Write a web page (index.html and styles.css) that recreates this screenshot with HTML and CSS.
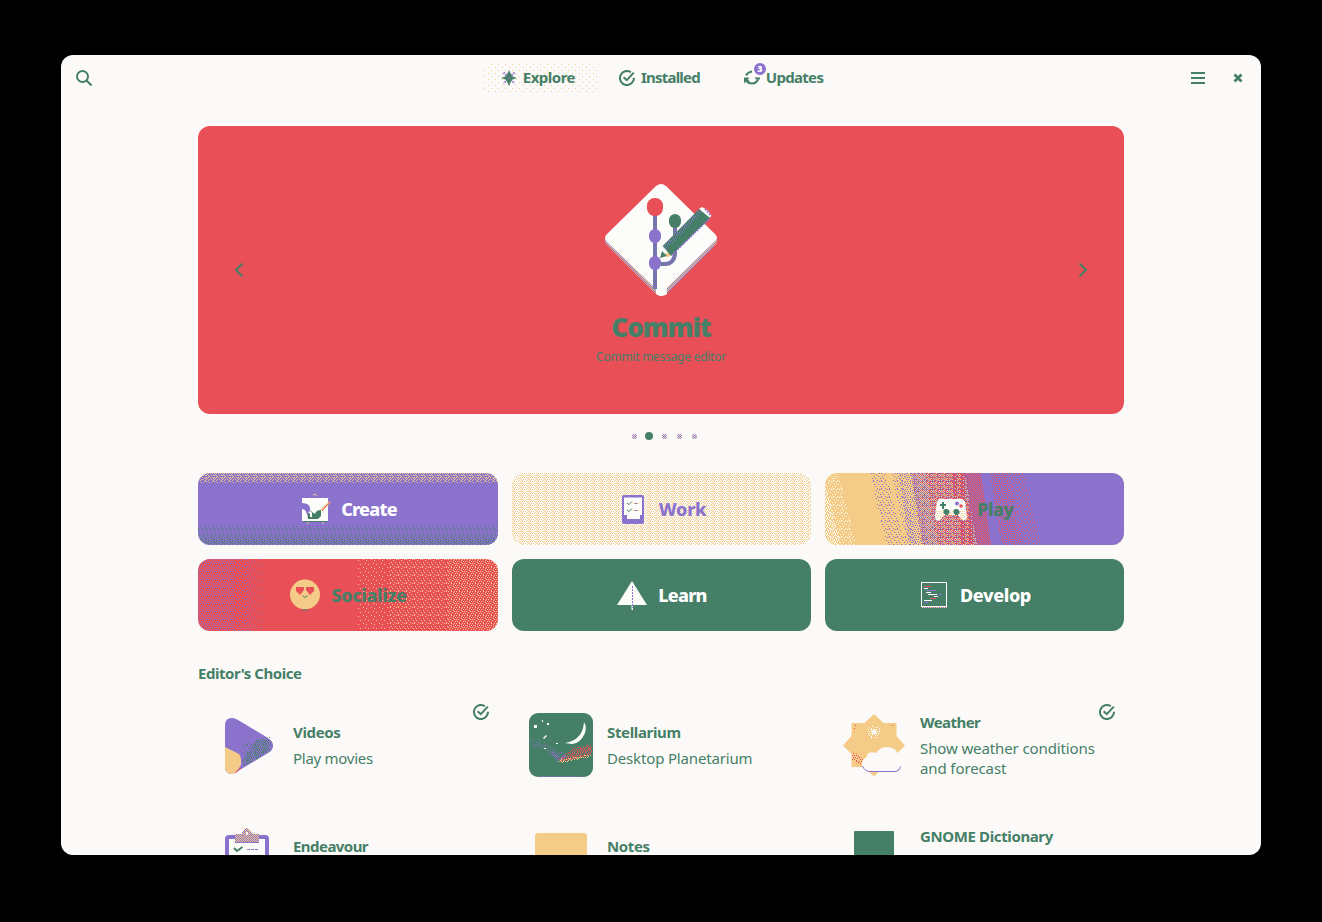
FILE: index.html
```html
<!DOCTYPE html>
<html lang="en">
<head>
<meta charset="utf-8">
<title>Software</title>
<link rel="stylesheet" href="styles.css">
</head>
<body>
<svg class="defs" width="0" height="0" aria-hidden="true">
  <defs>
    <path id="d1" d="M0 1.500h1M5 .5h1M2 5.500h1M7 4.500h1"/>
    <path id="d2" d="M0 .5h1M6 .5h1M3 1.500h1M1 3.500h1M5 3.500h1M2 5.500h1M7 5.500h1M4 7.500h1M0 7.500h1"/>
    <path id="d3" d="M0 .5h1M2 .5h1M5 .5h1M7 1.500h1M1 2.500h1M3 2.500h1M5 2.500h1M7 3.500h1M0 4.500h1M2 4.500h1M4 4.500h1M6 5.500h1M1 6.500h1M3 6.500h1M5 7.500h1"/>
    <path id="d4" d="M0 .5h1M2 .5h1M4 .5h1M6 .5h1M1 1.500h1M0 2.500h1M2 2.500h1M5 2.500h1M7 2.500h1M3 3.500h1M0 4.500h1M2 4.500h1M4 4.500h1M6 4.500h1M1 5.500h1M7 5.500h1M0 6.500h1M3 6.500h1M5 6.500h1M2 7.500h1M7 7.500h1"/>
    <pattern id="cream-0" width="7" height="6" patternUnits="userSpaceOnUse"><path class="f-cream" d="M1 1h1v1h-1zM5 4h1v1h-1z"/></pattern>
    <pattern id="cream-a" width="8" height="8" patternUnits="userSpaceOnUse"><use href="#d1" class="s-cream"/></pattern>
    <pattern id="cream-b" width="8" height="8" patternUnits="userSpaceOnUse"><use href="#d2" class="s-cream"/></pattern>
    <pattern id="cream-c" width="8" height="8" patternUnits="userSpaceOnUse"><use href="#d3" class="s-cream"/></pattern>
    <pattern id="cream-d" width="8" height="8" patternUnits="userSpaceOnUse"><use href="#d4" class="s-cream"/></pattern>
    <pattern id="green-b" width="8" height="8" patternUnits="userSpaceOnUse"><use href="#d2" class="s-green"/></pattern>
    <pattern id="green-c" width="8" height="8" patternUnits="userSpaceOnUse"><use href="#d3" class="s-green"/></pattern>
    <pattern id="green-d" width="8" height="8" patternUnits="userSpaceOnUse"><use href="#d4" class="s-green"/></pattern>
    <pattern id="purple-a" width="8" height="8" patternUnits="userSpaceOnUse"><use href="#d1" class="s-purple"/></pattern>
    <pattern id="purple-b" width="8" height="8" patternUnits="userSpaceOnUse"><use href="#d2" class="s-purple"/></pattern>
    <pattern id="purple-c" width="8" height="8" patternUnits="userSpaceOnUse"><use href="#d3" class="s-purple"/></pattern>
    <pattern id="purple-d" width="8" height="8" patternUnits="userSpaceOnUse"><use href="#d4" class="s-purple"/></pattern>
    <pattern id="purple-e" width="2" height="2" patternUnits="userSpaceOnUse"><path class="f-purple" d="M0 0h1v1h-1zM1 1h1v1h-1z"/></pattern>
    <pattern id="red-b" width="8" height="8" patternUnits="userSpaceOnUse" x="1" y="1"><use href="#d2" class="s-red"/></pattern>
    <pattern id="red-c" width="8" height="8" patternUnits="userSpaceOnUse" x="1" y="0"><use href="#d3" class="s-red"/></pattern>
    <pattern id="red-d" width="8" height="8" patternUnits="userSpaceOnUse" x="1" y="0"><use href="#d4" class="s-red"/></pattern>
    <pattern id="white-b" width="8" height="8" patternUnits="userSpaceOnUse"><use href="#d2" class="s-white"/></pattern>
    <pattern id="white-c" width="8" height="8" patternUnits="userSpaceOnUse"><use href="#d3" class="s-white"/></pattern>
    <symbol id="check" viewBox="0 0 16 16"><path class="line" d="M11.900 2.200A7 7 0 1 0 15 7.800M4.600 7.200l3.200 3L14.800 2.600"/></symbol>
  </defs>
</svg>

<main class="window">
  <header class="header">
    <button class="search" aria-label="Search"><svg width="16" height="16"><circle class="line" cx="6.500" cy="6.500" r="5.500"/><path class="line" d="M10.500 10.500L15.500 15.500"/></svg></button>
    <nav class="nav">
      <a class="nav-item active">
        <svg class="fill" width="114" height="31" shape-rendering="crispEdges"><rect width="114" height="31" rx="6" fill="url(#cream-0)"/></svg>
        <svg class="nav-icon" width="16" height="16"><path class="s-purple star-dots" d="M2.500 2.500l11 11M13.500 2.500l-11 11"/><path class="f-green" d="M8 0l2 4.500 1.500 2L16 8l-4.500 1.500-1.500 2L8 16l-2-4.500-1.500-2L0 8l4.500-1.500 1.500-2z"/><circle class="f-purple" cx="8" cy="8" r="1"/></svg>
        <span class="w-explore">Explore</span>
      </a>
      <a class="nav-item"><svg class="nav-icon" width="16" height="16"><use href="#check"/></svg><span class="w-installed">Installed</span></a>
      <a class="nav-item">
        <svg class="nav-icon" width="16" height="16"><path class="line" d="M2 5.500Q4 2 8 1.500M14 9.500Q12 13.500 8 13.500 5 13.500 3 11.500"/><path class="f-green" d="M0 7.500h5.500L4 9.500l1.500 2-2 2-1.500-2-2 2zM10.500 7.500H16v2h-4z"/></svg>
        <span class="w-updates">Updates</span><b class="badge">3</b>
      </a>
    </nav>
    <div class="controls">
      <svg width="14" height="12" shape-rendering="crispEdges"><path class="line" d="M0 1h14M0 6h14M0 11h14"/></svg>
      <svg width="10" height="10"><path class="line heavy" d="M1.500 1.500l7 7M8.500 1.500l-7 7"/></svg>
    </div>
  </header>

  <div class="content">
    <section class="banner">
      <svg class="arrow" width="10" height="16"><path class="line" d="M8.500 1.500L2 8l6.500 6.500"/></svg>
      <div class="feature">
        <svg width="128" height="128">
          <path class="f-cream" d="M8 61V65Q8 67 10 69L59 118Q64 122 69 118L118 69Q120 67 120 65V61Z"/>
          <path fill="url(#purple-e)" shape-rendering="crispEdges" d="M8 61V65Q8 67 10 69L59 118Q64 122 69 118L118 69Q120 67 120 65V61Z"/>
          <path class="f-white" d="M59 10Q64 6 69 10L118 58Q122 62 118 65L70 112V118Q64 122 59 118V113L10 66Q6 62 10 58Z"/>
          <path class="branch" d="M58 38V113M64 88H69Q78 87 78 76V50"/>
          <path class="branch-dots" d="M58 38V113M64 88H69Q78 87 78 76V50"/>
          <rect class="f-red" x="50" y="22" width="16" height="18" rx="7.500"/>
          <rect class="f-green" x="72" y="38" width="12" height="14" rx="6"/>
          <rect class="f-purple" x="52" y="53" width="12" height="14" rx="6"/>
          <rect class="f-purple" x="52" y="80" width="12" height="14" rx="6"/>
          <path class="f-white" d="M65.700 70L63 82 74 80ZM102 33L105 31Q112 34 114.500 40L112 42Z"/>
          <path class="f-cream" d="M68 77h6v3l-5 1z"/>
          <path class="f-green" d="M102 33L113 42 74 80 65.700 70ZM65 75l5 5-7 2z"/>
          <path fill="url(#purple-c)" shape-rendering="crispEdges" d="M102 33L106 36 69 73 65.700 70Z"/>
          <path class="pencil-edge" d="M112 43L75 79M108 33L114 40"/>
        </svg>
        <h1>Commit</h1>
        <p>Commit message editor</p>
      </div>
      <svg class="arrow" width="10" height="16"><path class="line" d="M1.500 1.500L8 8l-6.500 6.500"/></svg>
    </section>

    <div class="dots"><i></i><i class="on"></i><i></i><i></i><i></i></div>

    <section class="tiles">
      <a class="tile purple">
        <svg class="fill" width="300" height="72" shape-rendering="crispEdges"><path fill="url(#cream-d)" d="M0 0h300v8H0z"/><path fill="url(#cream-b)" d="M0 8h300v3H0z"/><path fill="url(#green-b)" d="M0 53h300v8H0z"/><path fill="url(#green-c)" d="M0 61h300v5H0z"/><path fill="url(#green-d)" d="M0 66h300v6H0z"/></svg>
        <svg width="32" height="32"><path class="s-cream" d="M14 2q3-2 4 1M9 26v5M24 26v5"/><path class="f-white" d="M3 5h26v23H3z"/><path class="f-green" d="M4 28h24v1H4zM8 18q3-2 5 1l3 2q1-4 6-4v6l-3 3H9z"/><path class="f-purple" d="M3 10q9 0 8 8l-3 4q-1-6-5-6z"/><path class="f-white" d="M9 19q3-2 4 1v4h-2v-3z"/><path class="s-cream thick" d="M22 17l9-8"/><path class="s-red" d="M23 18l8-9"/></svg>
        <span class="w-create">Create</span>
      </a>
      <a class="tile pale">
        <svg class="fill" width="299" height="72" shape-rendering="crispEdges"><path fill="url(#cream-d)" d="M0 0h299v72H0z"/></svg>
        <svg width="32" height="32"><rect class="f-purple" x="5" y="2" width="22" height="29" rx="2"/><path class="f-white" d="M7 4.500h18V22h-2v4H10v-4H7z"/><path class="s-green" d="M10 10l2 1.500 3-3M10 17l2 1.500 3-3"/><path class="s-cream" d="M16 10.500h6M16 17.500h6"/><path class="s-purple" d="M18 10.500h2M18 17.500h2"/></svg>
        <span class="w-work">Work</span>
      </a>
      <a class="tile sand">
        <svg class="fill" width="299" height="72" shape-rendering="crispEdges">
          <path fill="url(#white-b)" d="M0 0H13L31 72H0z"/>
          <path fill="url(#white-c)" d="M0 10L16 72H0z"/>
          <path fill="url(#purple-b)" d="M45 0H60L81 72H62z"/>
          <path fill="url(#purple-b)" d="M66 0H76L92 72H82z"/>
          <path fill="url(#purple-c)" d="M74 0H90L104 72H84z"/>
          <path fill="url(#purple-e)" d="M86 0H170V72H98z"/>
          <path fill="url(#red-b)" d="M86 0H170V72H96z"/>
          <path fill="url(#red-c)" d="M100 0H170V72H112z"/>
          <path fill="url(#red-d)" d="M126 0H170V72H136z"/>
          <path class="f-red" d="M140 0H170L185 72H152z"/>
          <path fill="url(#purple-e)" d="M138 0H170L185 72H150z"/>
          <path class="f-purple" d="M156 0H299V72H166z"/>
          <path fill="url(#red-c)" d="M165 0H184L198 72H176z"/>
          <path fill="url(#red-b)" d="M184 0H199L216 72H198z"/>
        </svg>
        <svg width="32" height="32"><path class="f-white" d="M2 9Q4 5 8 6H24Q28 5 30 9L32 24Q31 28 27 27L23 22H9L5 27Q0 29 0 23Z"/><path fill="url(#cream-c)" shape-rendering="crispEdges" d="M1 17h30v8l-4 2-4-5H9l-4 5-4-2z"/><path class="f-green" d="M7 9h2v2h2v2H9v3H7v-3H5v-2h2zM8.500 17l2-1h2l2 2v2l-2 2h-2l-2-2zM18.500 17l2-1h2l2 2v2l-2 2h-2l-2-2z"/><circle class="f-purple" cx="22" cy="10.500" r="2"/><circle class="f-red" cx="26" cy="13" r="1.800"/></svg>
        <span class="w-play">Play</span>
      </a>
      <a class="tile red">
        <svg class="fill" width="300" height="72" shape-rendering="crispEdges"><path fill="url(#purple-c)" d="M0 0h36v72H0z"/><path fill="url(#purple-b)" d="M36 0h18v72H36z"/><path fill="url(#purple-a)" d="M54 0h10v72H54z"/><path fill="url(#cream-a)" d="M160 0h32v72H160z"/><path fill="url(#cream-b)" d="M192 0h58v72H192z"/><path fill="url(#cream-c)" d="M250 0h50v72H250z"/></svg>
        <svg width="32" height="32"><circle class="f-cream" cx="16" cy="15.500" r="15"/><path class="f-red" d="M7 8h8v3l-4 5-4-4zM17 8h8v4l-4 4-4-5z"/><path class="s-green" d="M13.500 16.500l2.500 2 2.500-2M13 31h6"/></svg>
        <span class="w-social">Socialize</span>
      </a>
      <a class="tile green">
        <svg width="32" height="32"><path class="f-white" d="M16 2l15 24H17v5h-1.500v-5H1z"/><path class="spine" d="M16.500 7v22"/></svg>
        <span class="w-learn">Learn</span>
      </a>
      <a class="tile green">
        <svg width="32" height="32" shape-rendering="crispEdges"><path class="s-white" d="M3.500 3.500h25v24h-25z"/><path class="f-purple" d="M4 28h25v1H4z"/><path class="s-sill" d="M4 28.500h25"/><path class="s-red" d="M6 7.500h7M12 19.500h6"/><path class="s-white" d="M6 9.500h4M8 13.500h5M10 15.500h9M16 17.500h4M6 21.500h8"/><path class="s-purple" d="M8 11.500h10M20 15.500h4M6 23.500h4"/></svg>
        <span class="w-develop">Develop</span>
      </a>
    </section>

    <h2>Editor's Choice</h2>
    <section class="cards">
      <article class="card">
        <svg width="64" height="64"><path class="f-purple" d="M10 12Q10 5 17 5Q20 5 23 7L53 25Q58 28 58 33Q58 37 53 40L23 58Q19 61 16 61Q10 60 10 54Z"/><g shape-rendering="crispEdges"><path fill="url(#green-b)" d="M27 28h10L56 24V38L28 54z"/><path fill="url(#green-d)" d="M43 26L54 27q4 6-1 12L28 54V46z"/></g><path class="f-cream" d="M10 34l14 7q2 2 2 7v4q-5 9-10 9-6-1-6-7z"/><path class="s-red" d="M20 60l6-5"/></svg>
        <div><h3 class="w-videos">Videos</h3><p class="w-movies">Play movies</p></div>
        <svg class="mark" width="16" height="16"><use href="#check"/></svg>
      </article>
      <article class="card">
        <svg width="64" height="64"><rect class="f-green" width="64" height="64" rx="9"/><g shape-rendering="crispEdges"><path fill="url(#purple-b)" d="M1 25l14 3 20 13 5 3-10 6-15-13L1 30z"/><path fill="url(#purple-d)" d="M18 35l14 9 4-3v9h-7z"/><path fill="url(#red-d)" d="M29 47L44 35 63 31V42L31 49z"/><path fill="url(#red-c)" transform="translate(1 1)" d="M36 43L48 35 62 31V42L36 47z"/><path fill="url(#cream-d)" d="M29 47L63 41V44L31 50z"/></g><path class="f-white" d="M55 9q3 5 1 11-5 11-13 11l-7-1q18-3 19-21zM5 12h3v3H5zM13 7h1v2h-1zM18 10h2v2h-2zM17 22l1 1-3 3-1-1zM15 35h2v1h-2zM27 30h2v1h-2z"/><path class="sill" d="M10 63.500h44"/></svg>
        <div><h3 class="w-stellarium">Stellarium</h3><p class="w-desktop">Desktop Planetarium</p></div>
      </article>
      <article class="card">
        <svg width="64" height="64"><path class="f-cream" d="M9.500 10H22.500L32 1 41.500 10H54.500V23L63 32.500 54.500 41V54H42L32 63.500 22 54H9.500V41L1 32.500 9.500 23Z"/><path fill="url(#white-c)" d="M29 13h6l3 3v5l-3 4h-6l-3-3v-6z"/><circle class="f-white" cx="32" cy="19" r="2.500"/><path fill="url(#red-c)" d="M10 40h4l7 6-2 7-9-6z"/><path class="f-bg" d="M20 51q0-5 5-7v-2q2-4 9-2 4-6 11-6 8 0 11 7l5 2v9q-1 6-6 6H27q-7 0-7-7z"/><path class="s-purple" d="M20.500 53q2 5 7 5.500H54q4-1 4.500-5"/><path class="s-red" d="M13 12.500h1M12 15.500h1M50 12.500h1"/></svg>
        <div><h3 class="w-weather">Weather</h3><p class="w-show">Show weather conditions<br>and forecast</p></div>
        <svg class="mark" width="16" height="16"><use href="#check"/></svg>
      </article>
      <article class="card">
        <svg width="64" height="64"><rect class="f-purple" x="10" y="8" width="44" height="50" rx="4"/><path class="f-white" d="M14 12h36v44H14z"/><path class="f-cream" d="M20 7h7l1-3 4-3 4 3 1 3h7v9H20z"/><path fill="url(#purple-e)" shape-rendering="crispEdges" d="M20 7h7l1-3 4-3 4 3 1 3h7v9H20z"/><path class="f-white" d="M31 5h2v3h-2z"/><path class="s-purple" d="M20 15.500h24"/><path class="s-green thick" d="M19 21l3 3 5.500-4"/><path class="s-purple dash" d="M32 22.500h11"/></svg>
        <div><h3 class="w-endeavour">Endeavour</h3><p></p></div>
      </article>
      <article class="card">
        <svg width="64" height="64"><rect class="f-cream" x="6" y="6" width="52" height="54" rx="3"/></svg>
        <div><h3 class="w-notes">Notes</h3><p></p></div>
      </article>
      <article class="card">
        <svg width="64" height="64"><rect class="f-green" x="12" y="4" width="40" height="56" rx="1"/></svg>
        <div><h3 class="w-dict">GNOME Dictionary</h3><p class="two-lines"></p></div>
      </article>
    </section>
  </div>
</main>
</body>
</html>
```

FILE: styles.css
```css
:root {
  --bg: #fcfaf8;
  --red: #e84f57;
  --green: #457f67;
  --purple: #8b72cd;
  --cream: #f5cb88;
}
* { box-sizing: border-box; }
body {
  margin: 0;
  height: 922px;
  padding: 55px 61px;
  overflow: hidden;
  background: #000;
  color: var(--green);
  font: 15px/20px "Noto Sans", "Open Sans", sans-serif;
}
h1, h2, h3, p { margin: 0; }
svg { display: block; flex: none; }
.defs { position: absolute; }

.f-cream { fill: var(--cream); }
.f-green { fill: var(--green); }
.f-purple { fill: var(--purple); }
.f-red { fill: var(--red); }
.f-white { fill: #fcfcfb; }
.f-bg { fill: var(--bg); }
.line { fill: none; stroke: var(--green); stroke-width: 2; }
.heavy { stroke-width: 2.8; }
.s-cream, .s-green, .s-purple, .s-red, .s-white { fill: none; stroke-width: 1; }
.s-cream { stroke: var(--cream); }
.s-green { stroke: var(--green); }
.s-purple { stroke: var(--purple); }
.s-red { stroke: var(--red); }
.s-white { stroke: #fff; }
.thick { stroke-width: 2; }
.dash { stroke-dasharray: 3 1; }
.star-dots { stroke-width: 2; stroke-dasharray: 1.5 1; }
.s-sill { stroke: var(--cream); stroke-dasharray: 1 1; }
.sill { stroke: var(--purple); stroke-dasharray: 1 1; }
.spine { stroke: var(--purple); stroke-dasharray: 2 1; }
.branch { fill: none; stroke: var(--purple); stroke-width: 4; }
.branch-dots { fill: none; stroke: var(--green); stroke-width: 4; stroke-dasharray: 1 1; opacity: .6; }
.pencil-edge { fill: none; stroke: var(--purple); stroke-width: 1.5; stroke-dasharray: 2 1; }

.window {
  width: 1200px;
  height: 800px;
  overflow: hidden;
  border-radius: 12px;
  background: var(--bg);
}
.header {
  display: grid;
  grid-template-columns: 1fr auto 1fr;
  align-items: center;
  height: 46px;
  padding: 0 18px 0 15px;
}
.search { padding: 0; border: 0; background: none; }
.nav { display: flex; gap: 7px; margin-left: 6px; }
.nav-item {
  position: relative;
  display: flex;
  align-items: center;
  gap: 6px;
  height: 31px;
  padding: 0 19px 0 18px;
  font-weight: 700;
}
.nav-item span { position: relative; padding-bottom: 2px; }
.nav-icon { position: relative; margin-bottom: 1px; }
.fill { position: absolute; top: 0; left: 0; }
.badge {
  position: absolute;
  top: 0;
  left: 28px;
  width: 12px;
  height: 12px;
  border-radius: 50%;
  background: var(--purple);
  color: #fff;
  font-size: 9px;
  line-height: 12px;
  text-align: center;
}
.controls { display: flex; align-items: center; justify-content: flex-end; gap: 28px; }

.content { width: 926px; margin: 25px auto 0; }
.banner {
  display: flex;
  justify-content: space-between;
  height: 288px;
  padding: 0 36px;
  border-radius: 12px;
  background: var(--red);
}
.arrow { align-self: center; }
.feature { display: flex; flex-direction: column; align-items: center; padding-top: 50px; }
.feature h1 { margin-top: 6px; font-size: 26px; line-height: 34px; font-weight: 900; letter-spacing: -1.1px; }
.feature p { margin-top: 3px; font-size: 12px; line-height: 20px; letter-spacing: -.25px; }
.dots {
  display: flex;
  align-items: center;
  justify-content: center;
  gap: 7px;
  height: 44px;
  padding-left: 6px;
}
.dots i { display: grid; place-items: center; width: 8px; height: 8px; }
.dots i::before {
  content: "";
  width: 5px;
  height: 5px;
  border-radius: 50%;
  background: repeating-conic-gradient(var(--purple) 0 25%, #f3dfc6 0 50%) 0 0 / 2px 2px;
}
.dots .on::before { width: 8px; height: 8px; background: var(--green); }

.tiles {
  display: grid;
  grid-template-columns: 300px 299px 299px;
  gap: 14px;
  margin-top: 15px;
}
.tile {
  position: relative;
  display: flex;
  align-items: center;
  justify-content: center;
  gap: 10px;
  height: 72px;
  overflow: hidden;
  border-radius: 12px;
  font-size: 18px;
  line-height: 24px;
  font-weight: 800;
}
.tile > :not(.fill) { position: relative; }
.purple { background: var(--purple); color: #fff; }
.pale { color: var(--purple); }
.sand { background: var(--cream); }
.red { background: var(--red); }
.green { background: var(--green); color: #fff; }

h2 { margin-top: 32px; font-size: 15px; line-height: 20px; font-weight: 700; letter-spacing: -.47px; }
.cards {
  display: grid;
  grid-template-columns: 300px 299px 299px;
  grid-auto-rows: 100px;
  gap: 14px;
  margin-top: 12px;
}
.card { position: relative; display: flex; align-items: center; gap: 14px; padding: 0 17px; }
.card h3 { margin-bottom: 6px; font-size: 15px; line-height: 20px; font-weight: 700; white-space: nowrap; }
.card p { min-height: 20px; white-space: nowrap; }
.card .two-lines { min-height: 40px; }
.mark { position: absolute; top: 9px; right: 9px; }

.w-explore { letter-spacing: -.5px; }
.w-installed { letter-spacing: -.8px; }
.w-updates { letter-spacing: -.7px; }
.w-create { letter-spacing: -.8px; }
.w-work { letter-spacing: -.3px; }
.w-play { letter-spacing: -.5px; }
.w-social { letter-spacing: -.4px; }
.w-learn { letter-spacing: -.8px; }
.w-develop { letter-spacing: -.4px; }
.w-videos { letter-spacing: -.35px; }
.w-movies { letter-spacing: -.27px; }
.w-stellarium { letter-spacing: -.35px; }
.w-desktop { letter-spacing: -.16px; }
.w-weather { letter-spacing: -.55px; }
.w-show { letter-spacing: -.11px; }
.w-endeavour { letter-spacing: -.55px; }
.w-notes { letter-spacing: -.4px; }
.w-dict { letter-spacing: -.38px; }
```
